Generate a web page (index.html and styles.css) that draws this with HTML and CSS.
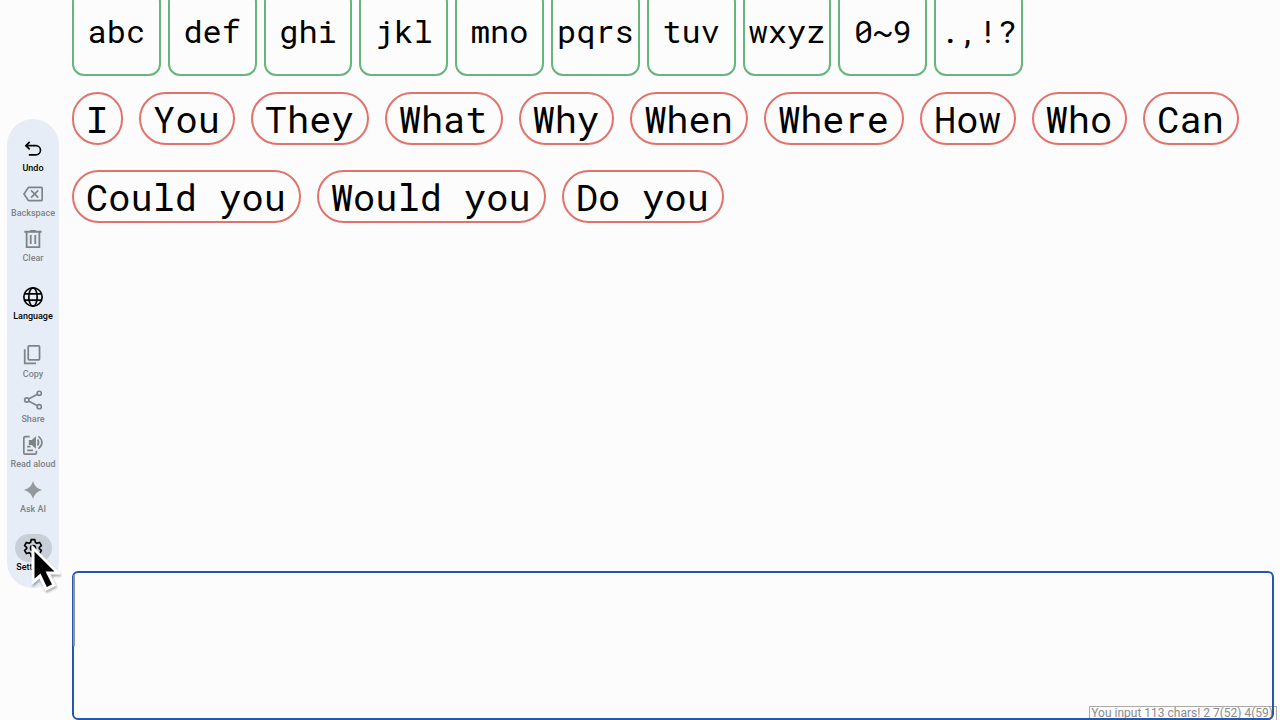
FILE: index.html
```html
<!DOCTYPE html>
<html lang="en">
<head>
<meta charset="utf-8">
<title>Text input board</title>
<meta name="viewport" content="width=device-width, initial-scale=1">
<link rel="stylesheet" href="styles.css">
</head>
<body>
<div class="app">
  <nav class="rail" aria-label="Tools">
    <div class="group">
      <button class="tool active"><span class="icon"><svg viewBox="0 0 24 24"><g fill="none" stroke="currentColor" stroke-width="2"><path d="M8 3.500 3.500 8 8 12.500M4 8h11.500a5.500 5.500 0 0 1 0 11H7"/></g></svg></span><span class="label">Undo</span></button>
      <button class="tool"><span class="icon"><svg viewBox="0 0 24 24"><path d="M22 3H7c-.69 0-1.230.350-1.590.880L0 12l5.410 8.110c.360.530.900.890 1.590.890h15c1.100 0 2-.900 2-2V5c0-1.100-.900-2-2-2zm0 16H7.070L2.400 12l4.660-7H22v14zm-11.590-2L14 13.410 17.590 17 19 15.590 15.410 12 19 8.410 17.590 7 14 10.590 10.410 7 9 8.410 12.590 12 9 15.590z"/></svg></span><span class="label">Backspace</span></button>
      <button class="tool"><span class="icon"><svg viewBox="1 1 22 22"><path d="M4 22V5H2.500V3H9V2h6v1h6.500v2H20v17zM6 20h12V5H6zM8.500 17.500h2v-10h-2zM13.500 17.500h2v-10h-2z" fill-rule="evenodd"/></svg></span><span class="label">Clear</span></button>
    </div>
    <div class="group">
      <button class="tool active"><span class="icon"><svg viewBox="0 0 24 24"><g fill="none" stroke="currentColor" stroke-width="2"><circle cx="12" cy="12" r="11"/><ellipse cx="12" cy="12" rx="5" ry="11"/><path d="M2 8.300h20M2 15.700h20"/></g></svg></span><span class="label">Language</span></button>
    </div>
    <div class="group">
      <button class="tool"><span class="icon"><svg viewBox="1 1 23 23"><g fill="none" stroke="currentColor" stroke-width="2"><rect x="7" y="2" width="13" height="16" rx="1"/><path d="M3 6v16h13"/></g></svg></span><span class="label">Copy</span></button>
      <button class="tool"><span class="icon"><svg viewBox="0 0 23 24"><g fill="none" stroke="currentColor" stroke-width="2"><circle cx="19" cy="4" r="2.500"/><circle cx="4" cy="12" r="2.500"/><circle cx="19" cy="20" r="2.500"/><path d="M6.200 10.800 16.800 5.200M6.200 13.200l10.600 5.600"/></g></svg></span><span class="label">Share</span></button>
      <button class="tool"><span class="icon"><svg viewBox="0 0 24 24"><g fill="none" stroke="currentColor" stroke-width="2"><path d="M8 2H2.500Q1 2 1 3.500v18Q1 23 2.500 23h12q1.500 0 1.500-1.500V19M5 14h4M5 18.500h7"/><path d="M17.500 5.500q2.500 3.500 0 7M18.500 1.500q8.500 7.500 0 15"/></g><path d="M7 6h3.500L15.500 1.500v15l-5-4.500H7z"/></svg></span><span class="label">Read aloud</span></button>
      <button class="tool"><span class="icon"><svg viewBox="1 1 22 22"><path d="M12 2q2 8 10 10-8 2-10 10-2-8-10-10 8-2 10-10z" fill="#95989d"/></svg></span><span class="label">Ask AI</span></button>
    </div>
    <div class="group">
      <button class="tool active selected"><span class="icon"><svg viewBox="0 0 24 24"><g fill="none" stroke="currentColor" stroke-width="2" stroke-linejoin="round"><path d="M9.800 2h4.400l.600 3.200 2 1.200 3.100-1.100 2.200 3.800-2.500 2.100v1.600l2.500 2.100-2.200 3.800-3.100-1.100-2 1.200-.600 3.200H9.800l-.600-3.200-2-1.200-3.100 1.100-2.200-3.800 2.500-2.100v-1.600L1.900 9.100l2.200-3.800 3.100 1.100 2-1.200z"/><circle cx="12" cy="12" r="3"/></g></svg></span><span class="label">Settings</span></button>
    </div>
    <svg class="cursor" viewBox="0 0 32 52" aria-hidden="true"><path d="M5 6v34l7-6 6 13 8-4-6-12h10z" fill="#000" stroke="#fff" stroke-width="3"/></svg>
  </nav>
  <main class="board">
    <div class="keys">
      <button class="key">abc</button><button class="key">def</button><button class="key">ghi</button><button class="key">jkl</button><button class="key">mno</button><button class="key">pqrs</button><button class="key">tuv</button><button class="key">wxyz</button><button class="key">0~9</button><button class="key">.,!?</button>
    </div>
    <div class="words">
      <button class="word">I</button><button class="word">You</button><button class="word">They</button><button class="word">What</button><button class="word">Why</button><button class="word">When</button><button class="word">Where</button><button class="word">How</button><button class="word">Who</button><button class="word">Can</button><button class="word">Could you</button><button class="word">Would you</button><button class="word">Do you</button>
    </div>
    <div class="editor">
      <span class="status">You input 113 chars! 2 7(52) 4(59)</span>
      <textarea class="text" aria-label="Text"></textarea>
      <span class="caret"></span>
    </div>
  </main>
</div>
</body>
</html>
```
FILE: styles.css
```css
* { box-sizing: border-box; }
body {
  margin: 0;
  background: #fcfcfc;
  color: #000;
  font-family: Roboto, "Liberation Sans", sans-serif;
}
button {
  margin: 0;
  background: none;
  color: inherit;
  font: inherit;
}
.app {
  display: flex;
  align-items: flex-start;
  gap: 13px;
  height: 100vh;
  padding: 0 6px 0 7px;
  overflow: hidden;
}
.rail {
  position: relative;
  display: flex;
  flex: none;
  flex-direction: column;
  gap: 20px;
  width: 52px;
  margin-top: 119px;
  padding: 16px 0;
  border-radius: 26px;
  background: #e6edf7;
}
.group {
  display: flex;
  flex-direction: column;
  gap: 7px;
}
.tool {
  display: flex;
  flex-direction: column;
  align-items: center;
  padding: 0;
  border: 0;
  color: #7f8388;
  font-size: 9px;
  font-weight: 500;
  line-height: 10px;
  white-space: nowrap;
}
.active { color: #000; }
.icon {
  display: flex;
  align-items: center;
  justify-content: center;
  width: 37px;
  height: 28px;
  border-radius: 14px;
}
.icon svg {
  width: 20px;
  height: 20px;
  fill: currentColor;
}
.selected .icon { background: #c9cfd8; }
.cursor {
  position: absolute;
  left: 21px;
  bottom: -6px;
  width: 32px;
  height: 52px;
  filter: drop-shadow(1px 2px 1px rgba(0, 0, 0, 0.3));
}
.board {
  display: flex;
  flex: 1;
  flex-direction: column;
  min-width: 0;
  height: 100%;
}
.keys {
  display: flex;
  flex: none;
  gap: 7px;
  max-width: 951px;
  margin-top: -10px;
}
.key {
  flex: 1;
  min-width: 0;
  height: 86px;
  padding: 0 0 5px;
  border: 2px solid #67b57d;
  border-radius: 12px;
  font-family: "Roboto Mono", "DejaVu Sans Mono", monospace;
  font-size: 32px;
}
.words {
  display: flex;
  flex-wrap: wrap;
  gap: 25px 16px;
  padding-top: 16px;
}
.word {
  height: 53px;
  padding: 0 13px 0 12px;
  border: 2px solid #e2726b;
  border-radius: 27px;
  font-family: "Roboto Mono", "DejaVu Sans Mono", monospace;
  font-size: 37px;
  line-height: 49px;
}
.editor {
  position: relative;
  height: 149px;
  margin-top: auto;
}
.text {
  position: relative;
  display: block;
  width: 100%;
  height: 100%;
  padding: 4px;
  border: 2px solid #2458b0;
  border-radius: 6px;
  background: transparent;
  font-family: "Roboto Mono", "DejaVu Sans Mono", monospace;
  font-size: 37px;
  outline: 0;
  resize: none;
}
.caret {
  position: absolute;
  top: 4px;
  left: 1px;
  width: 2px;
  height: 71px;
  background: #8f949c;
}
.status {
  position: absolute;
  right: -3px;
  bottom: -1px;
  padding: 0 3px 0 1px;
  border: 1px solid #aaa;
  color: #8c8c8c;
  font-size: 12px;
  line-height: 13px;
  white-space: nowrap;
}
```
